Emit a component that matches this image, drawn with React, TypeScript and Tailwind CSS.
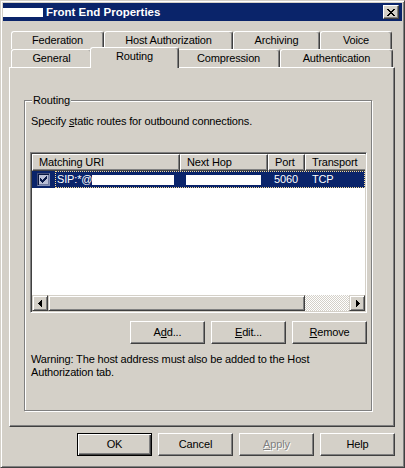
import React from 'react';

const raised =
  'border border-t-white border-l-white border-r-[#404040] border-b-[#404040] shadow-[inset_-1px_-1px_0_#808080]';
const scrollRaised =
  'border border-t-[#d4d0c8] border-l-[#d4d0c8] border-r-[#404040] border-b-[#404040] shadow-[inset_1px_1px_0_#fff,inset_-1px_-1px_0_#808080]';

function Button({
  children,
  primary,
  disabled,
}: {
  children: React.ReactNode;
  primary?: boolean;
  disabled?: boolean;
}) {
  const frame = primary
    ? 'border border-black shadow-[inset_1px_1px_0_#fff,inset_-1px_-1px_0_#404040,inset_-2px_-2px_0_#808080]'
    : raised;
  return (
    <div
      className={`w-[75px] h-[23px] flex items-center justify-center bg-[#d4d0c8] ${frame} ${
        disabled ? 'text-[#808080] [text-shadow:1px_1px_0_#fff]' : 'text-black'
      }`}
    >
      {children}
    </div>
  );
}

function Tab({ label, w, selected }: { label: string; w: string; selected?: boolean }) {
  return (
    <div
      className={`${w} flex items-center justify-center bg-[#d4d0c8] border-l border-t border-r border-l-white border-t-white border-r-[#404040] shadow-[inset_-1px_0_0_#808080] rounded-t-[3px] ${
        selected ? 'relative z-10 h-[21px] -mt-[2px] -mx-[2px] pb-[3px]' : 'h-[18px]'
      }`}
    >
      {label}
    </div>
  );
}

function HeaderCell({ label, w }: { label: string; w: string }) {
  return (
    <div className={`${w} shrink-0 h-full flex items-center pl-[6px] bg-[#d4d0c8] whitespace-nowrap overflow-hidden ${raised}`}>
      {label}
    </div>
  );
}

function ArrowLeft() {
  return (
    <svg width="5" height="7" viewBox="0 0 5 7" shapeRendering="crispEdges">
      <path d="M3 0h1v7H3zM2 1h1v5H2zM1 2h1v3H1zM0 3h1v1H0z" fill="#000" />
    </svg>
  );
}

function ArrowRight() {
  return (
    <svg width="5" height="7" viewBox="0 0 5 7" shapeRendering="crispEdges">
      <path d="M1 0h1v7H1zM2 1h1v5H2zM3 2h1v3H3zM4 3h1v1H4z" fill="#000" />
    </svg>
  );
}

function CheckBox() {
  return (
    <div className="w-[13px] h-[13px] border border-t-[#454f78] border-l-[#454f78] border-r-[#8591b5] border-b-[#8591b5] shadow-[inset_1px_1px_0_#061540,inset_-1px_-1px_0_#6f7aa0] bg-[#b9bfd6] flex items-center justify-center">
      <svg width="7" height="7" viewBox="0 0 7 7" shapeRendering="crispEdges">
        <path
          d="M6 0h1v1H6zM5 1h2v1H5zM0 2h1v1H0zM4 2h3v1H4zM0 3h2v1H0zM3 3h3v1H3zM0 4h5v1H0zM1 5h3v1H1zM2 6h1v1H2z"
          fill="#0a1a4a"
        />
      </svg>
    </div>
  );
}

export default function App() {
  return (
    <div className="w-[405px] h-[468px] bg-[#d4d0c8] border border-t-[#d4d0c8] border-l-[#d4d0c8] border-r-[#404040] border-b-[#404040] shadow-[inset_1px_1px_0_#fff,inset_-1px_-1px_0_#808080] p-[2px] flex flex-col font-['Liberation_Sans',Arial,sans-serif] text-[11px] leading-[13px] tracking-[-0.15px] text-black select-none">
      {/* Title bar */}
      <div className="h-[18px] bg-[#0a246a] flex items-center shrink-0">
        <div className="w-[40px] h-[9px] bg-white" />
        <span className="ml-[3px] text-white font-bold text-[11.5px] tracking-normal">Front End Properties</span>
        <div className={`ml-auto mr-[3px] w-[16px] h-[14px] bg-[#d4d0c8] flex items-center justify-center ${raised}`}>
          <svg width="8" height="7" viewBox="0 0 8 7" shapeRendering="crispEdges">
            <path
              d="M0 0h2v1H0zM6 0h2v1H6zM1 1h2v1H1zM5 1h2v1H5zM2 2h4v1H2zM3 3h2v1H3zM2 4h4v1H2zM1 5h2v1H1zM5 5h2v1H5zM0 6h2v1H0zM6 6h2v1H6z"
              fill="#000"
            />
          </svg>
        </div>
      </div>

      {/* Tabs */}
      <div className="mt-[10px] ml-[8px] flex flex-col shrink-0">
        <div className="flex">
          <Tab label="Federation" w="w-[93px]" />
          <Tab label="Host Authorization" w="w-[129px]" />
          <Tab label="Archiving" w="w-[87px]" />
          <Tab label="Voice" w="w-[72px]" />
        </div>
        <div className="flex items-start h-[18px]">
          <Tab label="General" w="w-[81px]" />
          <Tab label="Routing" w="w-[89px]" selected />
          <Tab label="Compression" w="w-[103px]" />
          <Tab label="Authentication" w="w-[113px]" />
        </div>
      </div>

      {/* Panel */}
      <div className={`ml-[6px] w-[386px] h-[360px] shrink-0 pl-[14px] pt-[32px] ${raised}`}>
        <div className="relative w-[348px] h-[311px] border border-[#808080] shadow-[1px_1px_0_#fff,inset_1px_1px_0_#fff] pl-[5px] pt-[14px]">
          <span className="absolute left-[7px] top-[-7px] px-[1px] bg-[#d4d0c8]">Routing</span>

          <div className="pl-[1px]">
            Specify <u>s</u>tatic routes for outbound connections.
          </div>

          {/* List view */}
          <div className="mt-[24px] w-[337px] h-[161px] bg-white border border-t-[#808080] border-l-[#808080] border-r-white border-b-white shadow-[inset_1px_1px_0_#404040,inset_-1px_-1px_0_#d4d0c8] p-[1px] flex flex-col">
            <div className="h-[17px] flex shrink-0 overflow-hidden">
              <HeaderCell label="Matching URI" w="w-[148px]" />
              <HeaderCell label="Next Hop" w="w-[88px]" />
              <HeaderCell label="Port" w="w-[37px]" />
              <HeaderCell label="Transport" w="w-[62px]" />
            </div>
            <div className="h-[17px] flex shrink-0 bg-[#0a246a] text-white overflow-hidden">
              <div className="w-[23px] shrink-0 flex items-center pl-[5px]">
                <CheckBox />
              </div>
              <div className="flex-1 flex items-center border border-dotted border-[#f5db95] whitespace-nowrap">
                <div className="w-[124px] shrink-0 flex items-center pl-[1px]">
                  <span>SIP:*@</span>
                  <span className="inline-block w-[82px] h-[10px] bg-white" />
                </div>
                <div className="w-[88px] shrink-0 flex items-center pl-[6px]">
                  <span className="inline-block w-[75px] h-[10px] bg-white" />
                </div>
                <div className="w-[37px] shrink-0 pl-[6px]">5060</div>
                <div className="flex-1 pl-[7px]">TCP</div>
              </div>
            </div>
            <div className="flex-1" />
            <div className="h-[16px] flex shrink-0">
              <div className={`w-[16px] h-full flex items-center justify-center bg-[#d4d0c8] ${scrollRaised}`}>
                <ArrowLeft />
              </div>
              <div className={`w-[257px] h-full bg-[#d4d0c8] ${scrollRaised}`} />
              <div className="flex-1 h-full bg-[repeating-conic-gradient(#fff_0%_25%,#d4d0c8_0%_50%)] [background-size:2px_2px]" />
              <div className={`w-[16px] h-full flex items-center justify-center bg-[#d4d0c8] ${scrollRaised}`}>
                <ArrowRight />
              </div>
            </div>
          </div>

          <div className="mt-[8px] w-[337px] flex justify-end gap-[6px]">
            <Button>
              A<u>d</u>d...
            </Button>
            <Button>
              <u>E</u>dit...
            </Button>
            <Button>
              <u>R</u>emove
            </Button>
          </div>

          <div className="mt-[9px] pl-[1px]">
            Warning: The host address must also be added to the Host
            <br />
            Authorization tab.
          </div>
        </div>
      </div>

      {/* Dialog buttons */}
      <div className="mt-[6px] pr-[7px] flex justify-end gap-[6px] shrink-0">
        <Button primary>OK</Button>
        <Button>Cancel</Button>
        <Button disabled>
          <u>A</u>pply
        </Button>
        <Button>Help</Button>
      </div>
    </div>
  );
}
